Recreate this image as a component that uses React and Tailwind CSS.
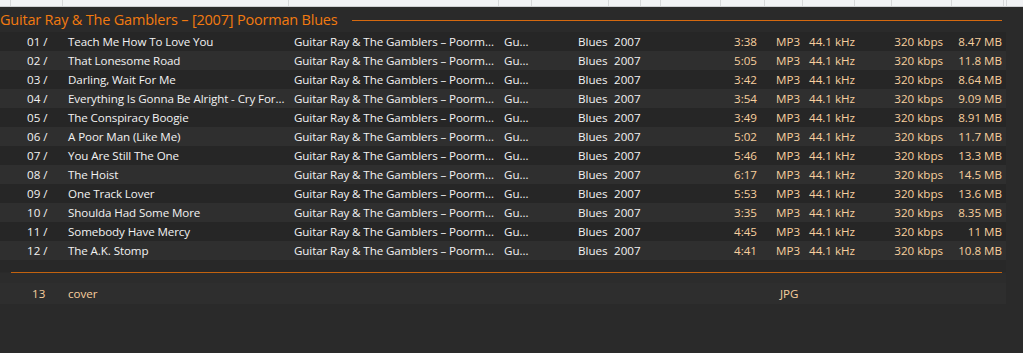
import React from "react";

const tracks = [
  ["01", "Teach Me How To Love You", "3:38", "8.47 MB"],
  ["02", "That Lonesome Road", "5:05", "11.8 MB"],
  ["03", "Darling, Wait For Me", "3:42", "8.64 MB"],
  ["04", "Everything Is Gonna Be Alright - Cry For…", "3:54", "9.09 MB"],
  ["05", "The Conspiracy Boogie", "3:49", "8.91 MB"],
  ["06", "A Poor Man (Like Me)", "5:02", "11.7 MB"],
  ["07", "You Are Still The One", "5:46", "13.3 MB"],
  ["08", "The Hoist", "6:17", "14.5 MB"],
  ["09", "One Track Lover", "5:53", "13.6 MB"],
  ["10", "Shoulda Had Some More", "3:35", "8.35 MB"],
  ["11", "Somebody Have Mercy", "4:45", "11 MB"],
  ["12", "The A.K. Stomp", "4:41", "10.8 MB"],
];

const seps = [11, 52, 226, 210, 33, 77, 32, 20, 60, 44, 38, 52, 37, 60, 52, 3];

export default function App() {
  return (
    <div
      className="w-[1023px] h-[353px] bg-[#2a2a2a] overflow-hidden text-[11.6px] leading-none"
      style={{ fontFamily: '"Open Sans", "Noto Sans", sans-serif' }}
    >
      <div className="flex h-[7px] bg-[#f1f2f4] border-b border-[#cfd0d2]">
        {seps.map((w, i) => (
          <div key={i} className="h-full border-r border-[#d6d7d9] shrink-0" style={{ width: w }} />
        ))}
        <div className="flex-1" />
      </div>
      <div className="flex items-center h-[25px] pt-[2px]">
        <span className="text-[14.5px] text-[#f27a10] whitespace-nowrap tracking-[-0.2px]">
          Guitar Ray &amp; The Gamblers – [2007] Poorman Blues
        </span>
        <div className="flex-1 h-px bg-[#d5690f] ml-[14px] mr-[21px]" />
      </div>
      <div className="w-[1006px]">
        {tracks.map((t, i) => (
          <div
            key={t[0]}
            className={`flex items-center h-[19px] whitespace-nowrap ${i % 2 === 0 ? "bg-[#262626]" : "bg-[#2f2f2f]"}`}
          >
            <span className="w-[27px] shrink-0" />
            <span className="w-[41px] shrink-0 text-[#f2f2f2]">{t[0]} /</span>
            <span className="w-[226px] shrink-0 text-[#f2f2f2] tracking-[-0.1px]">{t[1]}</span>
            <span className="w-[210px] shrink-0 text-[#f2f2f2] tracking-[-0.1px]">Guitar Ray &amp; The Gamblers – Poorm…</span>
            <span className="w-[74px] shrink-0 text-[#f2f2f2]">Gu…</span>
            <span className="w-[36px] shrink-0 text-[#f2f2f2]">Blues</span>
            <span className="w-[100px] shrink-0 text-[#f2f2f2]">2007</span>
            <span className="w-[43px] shrink-0 text-right text-[#f8cf9e]">{t[2]}</span>
            <span className="w-[19px] shrink-0" />
            <span className="w-[33px] shrink-0 text-[#f8cf9e]">MP3</span>
            <span className="w-[71px] shrink-0 text-[#f8cf9e]">44.1 kHz</span>
            <span className="w-[63px] shrink-0 text-right text-[#f8cf9e]">320 kbps</span>
            <span className="w-[59px] shrink-0 text-right text-[#f8cf9e]">{t[3]}</span>
          </div>
        ))}
        <div className="h-[12px] bg-[#282828]" />
        <div className="h-px bg-[#c2620f] ml-[11px] mr-[4px]" />
        <div className="h-[10px] bg-[#2c2c2c]" />
        <div className="flex items-center h-[21px] bg-[#2e2e2e] whitespace-nowrap">
          <span className="w-[32px] shrink-0" />
          <span className="w-[36px] shrink-0 text-[#f8cf9e]">13</span>
          <span className="w-[712px] shrink-0 text-[#f8cf9e]">cover</span>
          <span className="text-[#f8cf9e]">JPG</span>
        </div>
      </div>
    </div>
  );
}
